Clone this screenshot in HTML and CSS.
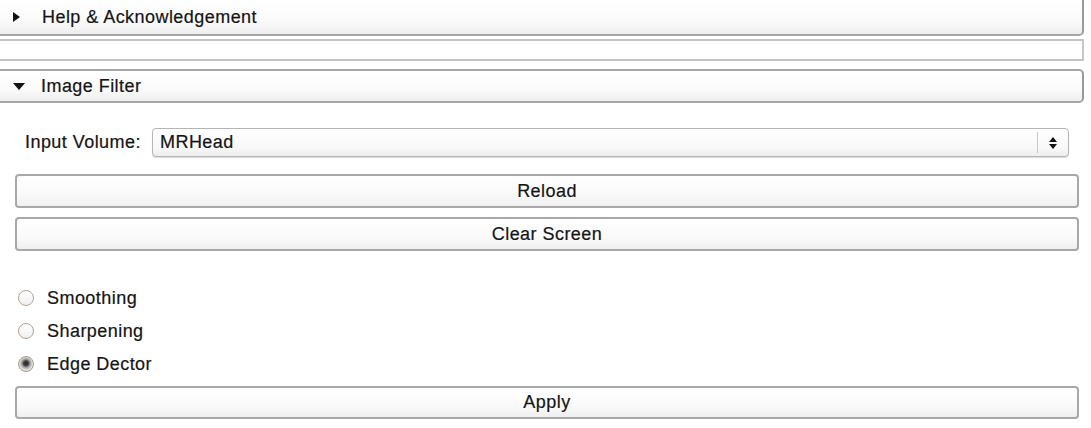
FILE: index.html
```html
<!DOCTYPE html>
<html>
<head>
<meta charset="utf-8">
<link rel="stylesheet" href="styles.css">
</head>
<body>
<div class="panel">
  <div class="hdr hdr-first">
    <span class="tri tri-right"></span>
    <span class="hdr-title">Help &amp; Acknowledgement</span>
  </div>
  <div class="strip"></div>
  <div class="hdr hdr-open">
    <span class="tri tri-down"></span>
    <span class="hdr-title">Image Filter</span>
  </div>
  <div class="content">
    <div class="input-row">
      <span class="label">Input Volume:</span>
      <div class="select">
        <span class="select-text">MRHead</span>
        <span class="select-div"></span>
        <span class="select-arrows">
          <span class="arr-up"></span>
          <span class="arr-down"></span>
        </span>
      </div>
    </div>
    <div class="btns">
      <div class="btn">Reload</div>
      <div class="btn">Clear Screen</div>
    </div>
    <div class="radios">
      <div class="radio-row"><span class="radio"></span><span class="rlabel">Smoothing</span></div>
      <div class="radio-row"><span class="radio"></span><span class="rlabel">Sharpening</span></div>
      <div class="radio-row"><span class="radio checked"></span><span class="rlabel">Edge Dector</span></div>
    </div>
    <div class="btn btn-apply">Apply</div>
  </div>
</div>
</body>
</html>
```

FILE: styles.css
```css
html, body {
  margin: 0;
  padding: 0;
  background: #ffffff;
}
body {
  font-family: "Liberation Sans", Arial, sans-serif;
  font-size: 18px;
  letter-spacing: 0.45px;
  color: #141414;
  -webkit-text-stroke: 0.2px #141414;
  width: 1091px;
  height: 428px;
  overflow: hidden;
}
.panel {
  display: flex;
  flex-direction: column;
}
.hdr {
  width: 1084px;
  box-sizing: border-box;
  display: flex;
  align-items: center;
  background: linear-gradient(#ffffff, #fbfbfb 60%, #eeeeee);
  border-right: 2px solid #9a9a9a;
  border-bottom: 2px solid #a6a6a6;
  border-radius: 0 0 5px 0;
}
.hdr-first {
  height: 36px;
}
.hdr-open {
  height: 34px;
  margin-top: 8px;
  border-top: 2px solid #a6a6a6;
  border-radius: 0 5px 5px 0;
}
.strip {
  width: 1084px;
  box-sizing: border-box;
  height: 22px;
  margin-top: 3px;
  border-top: 2px solid #c4c4c4;
  border-bottom: 2px solid #c4c4c4;
  border-right: 2px solid #c8c8c8;
  background: #ffffff;
}
.tri {
  width: 0;
  height: 0;
}
.tri-right {
  border-top: 5.5px solid transparent;
  border-bottom: 5.5px solid transparent;
  border-left: 7px solid #111;
  margin-left: 13px;
  margin-right: 22px;
}
.tri-down {
  border-left: 6.5px solid transparent;
  border-right: 6.5px solid transparent;
  border-top: 7px solid #111;
  margin-left: 13px;
  margin-right: 16px;
}
.hdr-first .hdr-title {
  margin-top: 1px;
}
.content {
  padding: 0 12px 0 15px;
  display: flex;
  flex-direction: column;
}
.input-row {
  display: flex;
  align-items: center;
  margin-top: 25px;
  height: 29px;
}
.label {
  margin-left: 10px;
  width: 127px;
}
.select {
  flex: 1;
  margin-right: 10px;
  height: 29px;
  box-sizing: border-box;
  border: 1px solid #b5b5b5;
  border-radius: 4px;
  background: linear-gradient(#ffffff, #f8f8f8 70%, #ededed);
  display: flex;
  align-items: center;
  box-shadow: 0 1px 1px rgba(0,0,0,0.15);
}
.select-text {
  flex: 1;
  padding-left: 7px;
}
.select-div {
  width: 1px;
  height: 21px;
  background: #c8c8c8;
}
.select-arrows {
  width: 30px;
  display: flex;
  flex-direction: column;
  align-items: center;
  gap: 2px;
}
.arr-up {
  width: 0; height: 0;
  border-left: 4.5px solid transparent;
  border-right: 4.5px solid transparent;
  border-bottom: 5px solid #111;
}
.arr-down {
  width: 0; height: 0;
  border-left: 4.5px solid transparent;
  border-right: 4.5px solid transparent;
  border-top: 5px solid #111;
}
.btns {
  display: flex;
  flex-direction: column;
  gap: 9px;
  margin-top: 17px;
}
.btn {
  height: 34px;
  box-sizing: border-box;
  border: 2px solid #a8a8a8;
  border-radius: 4px;
  background: linear-gradient(#ffffff, #fafafa 60%, #f0f0f0);
  display: flex;
  align-items: center;
  justify-content: center;
}
.radios {
  display: flex;
  flex-direction: column;
  margin-top: 38px;
  gap: 15px;
}
.radio-row {
  display: flex;
  align-items: center;
  height: 18px;
}
.radio {
  width: 16px;
  height: 16px;
  box-sizing: border-box;
  border: 1.5px solid #b0a497;
  border-radius: 50%;
  margin-left: 3px;
  margin-right: 13px;
  background: linear-gradient(#ffffff, #f0f0f0);
}
.radio.checked {
  border-color: #a89c90;
  background: radial-gradient(circle at 50% 45%, #222 0, #444 2.5px, #9a9a9a 4px, #e0e0e0 6.5px);
}
.btn-apply {
  margin-top: 13px;
  height: 33px;
}
```
